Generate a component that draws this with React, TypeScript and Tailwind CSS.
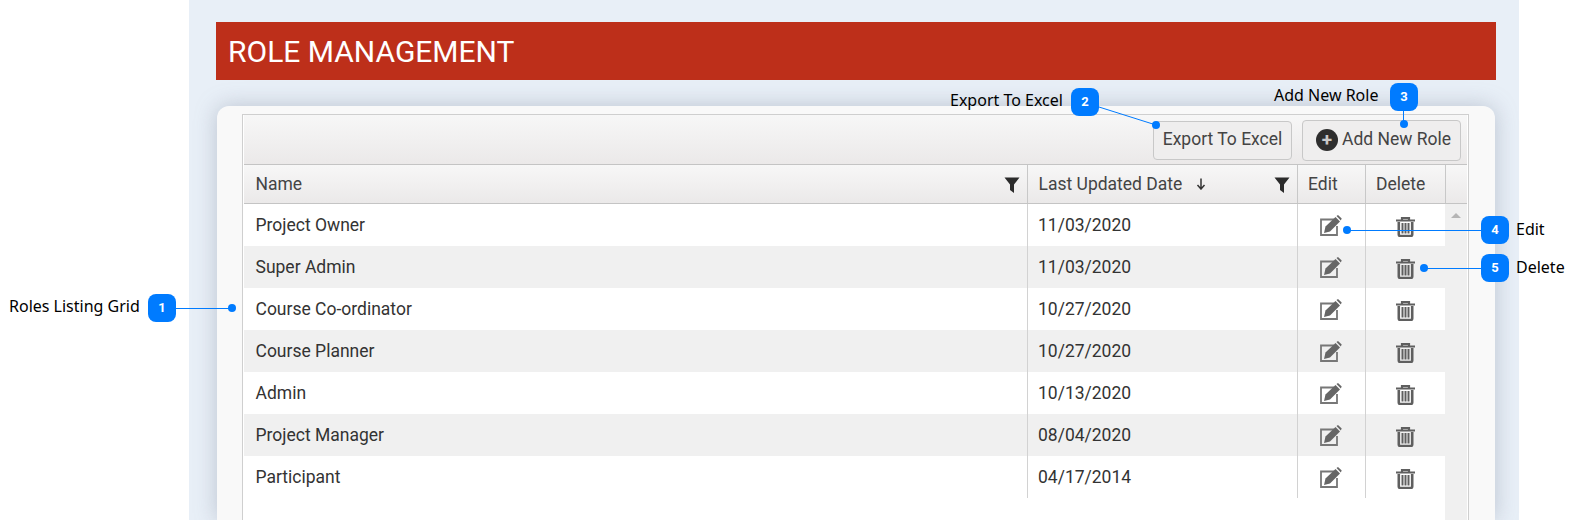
import React from "react";

const roles = [
  { name: "Project Owner", date: "11/03/2020" },
  { name: "Super Admin", date: "11/03/2020" },
  { name: "Course Co-ordinator", date: "10/27/2020" },
  { name: "Course Planner", date: "10/27/2020" },
  { name: "Admin", date: "10/13/2020" },
  { name: "Project Manager", date: "08/04/2020" },
  { name: "Participant", date: "04/17/2014" },
];

const FilterIcon = () => (
  <svg width="16" height="16" viewBox="0 0 15 16" className="shrink-0 translate-y-px">
    <path d="M0 0.500h15L9.500 7.500V16L5.500 13V7.500z" fill="#2b2b2b" />
  </svg>
);

const EditIcon = () => (
  <svg width="22" height="21" viewBox="0 0 22 21" className="-translate-x-px">
    <path d="M14 4.500H1v15.500h16v-9" fill="none" stroke="#777" strokeWidth="1.800" />
    <path d="M5.500 11.500L15.500 2l4.500 4.500-10 10L4 18z" fill="#666" />
    <path d="M16.500 1L18 0l3.700 3.500-0.900 2z" fill="#666" />
  </svg>
);

const TrashIcon = () => (
  <svg width="19" height="20" viewBox="0 0 19 20" className="translate-y-[2px]">
    <path d="M0 3.500h19M6 3V1h7v2" fill="none" stroke="#5f5f5f" strokeWidth="2.200" />
    <path d="M2.800 5v12.500q0 1.500 1.500 1.500h10.400q1.500 0 1.500-1.500V5" fill="none" stroke="#5f5f5f" strokeWidth="2.600" />
    <path d="M6.500 6v10.500M9.500 6v10.500M12.500 6v10.500" fill="none" stroke="#5f5f5f" strokeWidth="2" />
  </svg>
);

const Badge = ({ n, className }: { n: number; className: string }) => (
  <div
    className={`absolute z-20 flex h-[28px] w-[28px] items-center justify-center rounded-lg bg-[#007bff] text-[13px] font-bold text-white ${className}`}
  >
    {n}
  </div>
);

const Dot = ({ className }: { className: string }) => (
  <div className={`absolute z-20 h-2 w-2 rounded-full bg-[#007bff] ${className}`} />
);

const Label = ({ text, className }: { text: string; className: string }) => (
  <div
    className={`absolute z-20 whitespace-nowrap font-['Noto_Sans',sans-serif] text-[16px] leading-5 text-black ${className}`}
  >
    {text}
  </div>
);

export default function App() {
  return (
    <div className="relative flex h-[520px] w-[1572px] overflow-hidden bg-white font-['Roboto',sans-serif] text-[#333]">
      <div className="ml-[189px] flex h-full w-[1330px] flex-col bg-[#e8eff7] pl-[27px] pr-[23px] pt-[22px]">
        <div className="relative z-10 flex h-[58px] items-center bg-[#bd2f1a] pl-[12px] text-[30px] text-white">
          ROLE MANAGEMENT
        </div>

        <div className="ml-px mr-px mt-[26px] flex-1 rounded-t-xl bg-[#f9f9f9] pl-[25px] pr-[26px] pt-2 shadow-[0_0_22px_rgba(120,130,150,0.4)]">
          <div className="flex h-full flex-col border border-b-0 border-[#cfcfcf] bg-white px-px">
            <div className="flex h-[49px] items-start justify-end gap-[10px] bg-gradient-to-b from-[#f7f7f7] to-[#ebe9e9] pr-[6px] pt-[5px] text-[17.5px] text-[#444]">
              <button className="mt-px h-[39px] w-[139px] rounded border border-[#c8c8c8] bg-[#efeeee] pb-[2px] text-center">
                Export To Excel
              </button>
              <button className="flex h-[41px] w-[159px] items-center gap-[4px] rounded border border-[#c8c8c8] bg-[#efeeee] pb-[2px] pl-[13px]">
                <span className="flex h-[22px] w-[22px] items-center justify-center rounded-full bg-[#2e2e2e] text-[19px] font-bold leading-none text-[#c9c9c9]">
                  +
                </span>
                Add New Role
              </button>
            </div>

            <div className="flex h-10 border-y border-[#c4c4c4] bg-gradient-to-b from-[#f7f7f7] to-[#ebe9e9] text-[17.5px] text-[#444]">
              <div className="flex w-[783px] items-center justify-between pl-[11.5px] pr-[7px]">
                Name
                <FilterIcon />
              </div>
              <div className="flex w-[270px] items-center justify-between border-l border-[#c8c8c8] pl-[10.5px] pr-[7px]">
                <span className="flex items-center gap-[14px]">
                  Last Updated Date
                  <svg width="10" height="12" viewBox="0 0 10 12">
                    <path d="M5 0.500v10M1.500 7L5 11l3.500-4" fill="none" stroke="#333" strokeWidth="1.500" />
                  </svg>
                </span>
                <FilterIcon />
              </div>
              <div className="flex w-[68px] items-center border-l border-[#c8c8c8] pl-[10px]">Edit</div>
              <div className="flex w-[81px] items-center border-x border-[#c8c8c8] pl-[10px]">Delete</div>
            </div>

            <div className="flex flex-1">
              <div className="w-[1201px]">
                {roles.map((role, i) => (
                  <div
                    key={role.name}
                    className={`flex h-[42px] items-center text-[17.5px] ${i % 2 === 1 ? "bg-[#f0f0f0]" : "bg-white"}`}
                  >
                    <div className="w-[783px] self-stretch pl-[11.5px] leading-[42px]">{role.name}</div>
                    <div className="w-[270px] self-stretch border-l border-[#d2d2d2] pl-[10px] leading-[42px]">
                      {role.date}
                    </div>
                    <div className="flex w-[68px] items-center justify-center self-stretch border-l border-[#d2d2d2]">
                      <EditIcon />
                    </div>
                    <div className="flex w-[80px] items-center justify-center self-stretch border-l border-[#d2d2d2]">
                      <TrashIcon />
                    </div>
                  </div>
                ))}
              </div>
              <div className="flex w-[22px] justify-center bg-[#f0f0f0] pt-[9px]">
                <div className="h-0 w-0 border-x-[5px] border-b-[5px] border-x-transparent border-b-[#b5b5b5]" />
              </div>
            </div>
          </div>
        </div>
      </div>

      {/* callout lines */}
      <svg className="pointer-events-none absolute inset-0 z-10" width="1572" height="520">
        <g stroke="#007bff" strokeWidth="1" fill="none">
          <path d="M176 308.500H232" />
          <path d="M1099 107L1156 125" />
          <path d="M1403.500 110V124" />
          <path d="M1347 230.500H1481" />
          <path d="M1424 268.500H1481" />
        </g>
      </svg>

      <Label text="Roles Listing Grid" className="left-[9px] top-[296px]" />
      <Badge n={1} className="left-[148px] top-[294px]" />
      <Dot className="left-[228px] top-[304px]" />

      <Label text="Export To Excel" className="left-[950px] top-[90px]" />
      <Badge n={2} className="left-[1071px] top-[88px]" />
      <Dot className="left-[1152px] top-[121px]" />

      <Label text="Add New Role" className="left-[1274px] top-[85px]" />
      <Badge n={3} className="left-[1390px] top-[83px]" />
      <Dot className="left-[1400px] top-[120px]" />

      <Dot className="left-[1343px] top-[226px]" />
      <Badge n={4} className="left-[1481px] top-[216px]" />
      <Label text="Edit" className="left-[1516px] top-[219px]" />

      <Dot className="left-[1420px] top-[264px]" />
      <Badge n={5} className="left-[1481px] top-[254px]" />
      <Label text="Delete" className="left-[1516px] top-[257px]" />
    </div>
  );
}
